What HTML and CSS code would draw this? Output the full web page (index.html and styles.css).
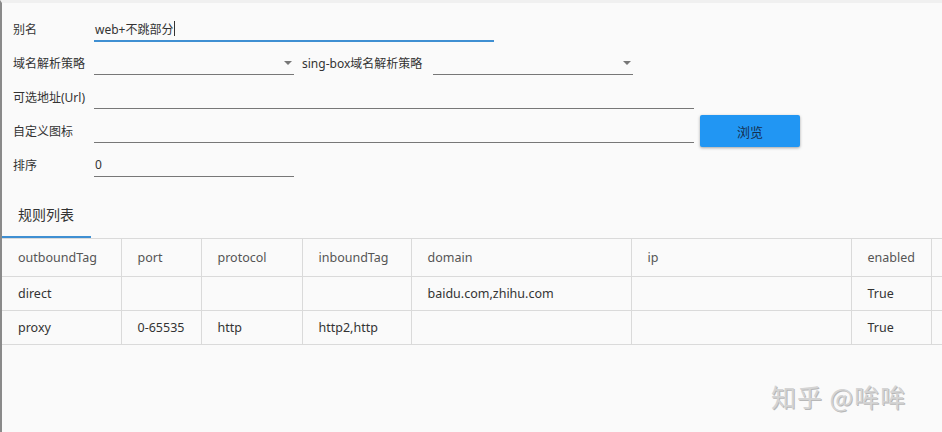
FILE: index.html
```html
<!DOCTYPE html>
<html lang="zh-CN">
<head>
    <meta charset="UTF-8">
    <title>路由规则</title>
    <link rel="stylesheet" href="styles.css">
</head>
<body>
    <div class="window">
        <div class="form">
            <div class="row">
                <label class="label">别名</label>
                <div class="field field-active w400"><span class="value">web+不跳部分</span><span class="caret"></span></div>
            </div>

            <div class="row">
                <label class="label">域名解析策略</label>
                <div class="field select w200"><span class="arrow"></span></div>
                <label class="label label-wide">sing-box域名解析策略</label>
                <div class="field select w200"><span class="arrow"></span></div>
            </div>

            <div class="row">
                <label class="label">可选地址(Url)</label>
                <div class="field w600"></div>
            </div>

            <div class="row">
                <label class="label">自定义图标</label>
                <div class="field w600"></div>
                <button class="btn">浏览</button>
            </div>

            <div class="row">
                <label class="label">排序</label>
                <div class="field w200"><span class="value">0</span></div>
            </div>
        </div>

        <div class="tabs">
            <div class="tab active">规则列表</div>
        </div>

        <table class="grid">
            <thead>
                <tr>
                    <th class="c1">outboundTag</th>
                    <th class="c2">port</th>
                    <th class="c3">protocol</th>
                    <th class="c4">inboundTag</th>
                    <th class="c5">domain</th>
                    <th class="c6">ip</th>
                    <th class="c7">enabled</th>
                    <th class="c8"></th>
                </tr>
            </thead>
            <tbody>
                <tr>
                    <td>direct</td>
                    <td></td>
                    <td></td>
                    <td></td>
                    <td>baidu.com,zhihu.com</td>
                    <td></td>
                    <td>True</td>
                    <td></td>
                </tr>
                <tr>
                    <td>proxy</td>
                    <td>0-65535</td>
                    <td>http</td>
                    <td>http2,http</td>
                    <td></td>
                    <td></td>
                    <td>True</td>
                    <td></td>
                </tr>
            </tbody>
        </table>

        <div class="watermark">知乎 @哞哞</div>
    </div>
</body>
</html>
```

FILE: styles.css
```css
* {
    box-sizing: border-box;
}
html, body {
    margin: 0;
    padding: 0;
}
body {
    font-family: "Noto Sans", "Noto Sans CJK SC", sans-serif;
    background-color: #fafafa;
    color: #333;
    width: 942px;
    height: 432px;
    overflow: hidden;
}
.window {
    position: relative;
    height: 432px;
    border-left: 2px solid #8a8a8a;
    border-top: 3px solid #f0f0f0;
}
.form {
    padding: 9px 0 0 11px;
}
.row {
    display: flex;
    align-items: center;
    height: 34px;
    font-size: 12px;
}
.label {
    width: 81px;
    flex: none;
    color: #333;
}
.label-wide {
    width: 139px;
    padding-left: 8px;
}
.field {
    position: relative;
    height: 24px;
    border-bottom: 1px solid #777;
    display: flex;
    align-items: center;
    padding-left: 1px;
    flex: none;
}
.field-active {
    border-bottom: 2px solid #3f8fd2;
    height: 25px;
    margin-top: 1px;
}
.w200 {
    width: 200px;
}
.w400 {
    width: 400px;
}
.w600 {
    width: 600px;
}
.value {
    color: #333;
}
.caret {
    width: 1px;
    height: 15px;
    background-color: #333;
    margin-left: 1px;
}
.arrow {
    position: absolute;
    right: 2px;
    top: 10px;
    border-left: 4px solid transparent;
    border-right: 4px solid transparent;
    border-top: 4px solid #777;
}
.btn {
    width: 100px;
    height: 32px;
    margin-left: 6px;
    border: none;
    border-radius: 2px;
    background-color: #2196f3;
    color: #15304f;
    font-family: "Noto Sans CJK SC", sans-serif;
    font-size: 13px;
    box-shadow: 0 1px 3px rgba(0, 0, 0, 0.35);
    cursor: pointer;
}
.tabs {
    display: flex;
    margin-top: 7px;
}
.tab {
    width: 89px;
    height: 49px;
    padding: 15px 0 0 16px;
    font-size: 14px;
    color: #333;
}
.tab.active {
    border-bottom: 2px solid #3f8fd2;
}
.grid {
    border-collapse: collapse;
    table-layout: fixed;
    width: 940px;
    font-size: 12.5px;
}
.grid th,
.grid td {
    border: 1px solid #dadada;
    text-align: left;
    font-weight: normal;
    padding: 0 0 0 16px;
    white-space: nowrap;
    overflow: hidden;
}
.grid th:first-child,
.grid td:first-child {
    border-left: none;
}
.grid th {
    height: 38px;
    color: #555;
}
.grid td {
    height: 34px;
    color: #333;
}
.c1 { width: 119px; }
.c2 { width: 80px; }
.c3 { width: 101px; }
.c4 { width: 109px; }
.c5 { width: 220px; }
.c6 { width: 220px; }
.c7 { width: 80px; }
.c8 { width: 11px; }
.watermark {
    position: absolute;
    left: 769px;
    top: 375px;
    font-family: "Noto Sans CJK SC", sans-serif;
    font-size: 25px;
    color: #d4d4d4;
    text-shadow: 1px 1px 0 #b8b8b8;
    letter-spacing: 1px;
}
```
